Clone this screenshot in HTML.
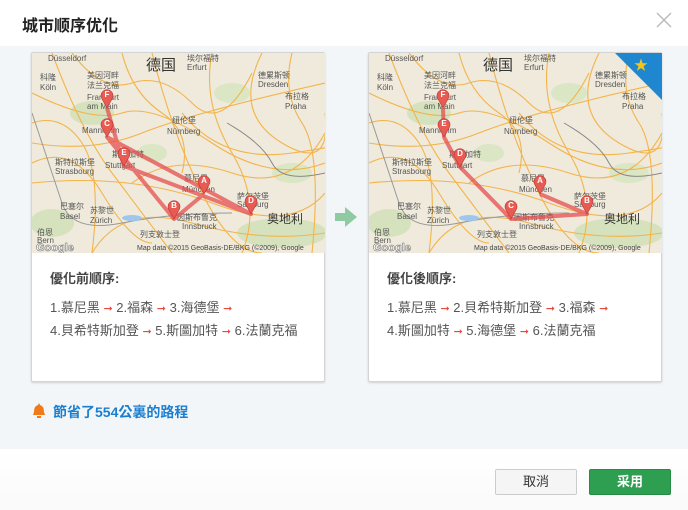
<!DOCTYPE html>
<html><head><meta charset="utf-8"><style>
*{margin:0;padding:0;box-sizing:border-box}
body{width:688px;height:510px;position:relative;overflow:hidden;background:#fff;font-family:"Liberation Sans","Noto Sans CJK TC",sans-serif;color:#333}
.hdr{position:absolute;left:0;top:0;width:688px;height:46px;background:#fff}
.title{position:absolute;left:22px;top:12px;font-size:16px;font-weight:bold;color:#222}
.close{position:absolute;left:654px;top:10px}
.body{position:absolute;left:0;top:46px;width:688px;height:403px;background:#f3f6f9}
.card{position:absolute;top:52px;width:294px;height:330px;background:#fff;border:1px solid #d4d4d4;border-radius:2px;box-shadow:0 1px 2px rgba(0,0,0,.15)}
.card svg{position:absolute;left:0;top:0}
.h{position:absolute;left:18px;top:215px;font-size:13px;font-weight:bold;color:#444}
.l{position:absolute;left:18px;font-size:13px;color:#555;white-space:nowrap}
.a{color:#e8483c;font-size:11px}
.save{position:absolute;left:53px;top:402px;font-size:14px;font-weight:bold;color:#1a7fd0}
.btn{position:absolute;top:469px;height:26px;width:82px;border-radius:2px;font-size:13px;text-align:center;line-height:24px}
.foot{position:absolute;left:0;top:449px;width:688px;height:61px;background:linear-gradient(#fff,#fafafa)}
</style></head><body>
<div class="hdr"></div>
<div class="title">城市顺序优化</div>
<svg class="close" width="20" height="20"><path d="M3 3L17 17M17 3L3 17" stroke="#bbb" stroke-width="1.5"/></svg>
<div class="body"></div>

<svg width="0" height="0" style="position:absolute"><defs>
<g id="map">
<rect width="293" height="200" fill="#efeadc"/>
<ellipse cx="60" cy="60" rx="22" ry="12" fill="#cfe0b5" opacity=".8"/>
<ellipse cx="250" cy="180" rx="45" ry="15" fill="#cfe0b5" opacity=".8"/>
<ellipse cx="20" cy="170" rx="22" ry="14" fill="#cfe0b5" opacity=".8"/>
<ellipse cx="200" cy="40" rx="18" ry="10" fill="#d6e5bf" opacity=".8"/>
<ellipse cx="120" cy="100" rx="15" ry="9" fill="#d6e5bf" opacity=".8"/>
<ellipse cx="260" cy="120" rx="20" ry="10" fill="#d6e5bf" opacity=".8"/>
<g stroke="#f3b44a" fill="none" stroke-width="1.1">
<path d="M0 40 Q60 70 90 60 T180 90 T293 110"/>
<path d="M20 0 Q50 80 80 120 T140 200"/>
<path d="M0 130 Q100 120 180 150 T293 140"/>
<path d="M120 0 Q140 80 170 140 T230 200"/>
<path d="M230 0 Q200 60 250 90 T293 60"/>
<path d="M0 90 Q60 100 110 80 T293 30"/>
<path d="M60 200 Q90 150 160 170 T293 180"/>
<path d="M40 0 Q70 40 100 30 T160 50 T220 20"/>
<path d="M0 110 Q40 90 70 140 T120 190"/>
<path d="M150 60 Q190 110 260 100 T293 90"/>
<path d="M180 0 Q170 50 200 100 T210 200"/>
<path d="M90 0 Q100 40 130 60 T150 120"/>
<path d="M260 0 Q250 40 270 70 T280 200"/>
<path d="M0 70 Q30 60 50 90 T60 200"/>
<path d="M100 130 Q140 100 200 120 T293 80"/>
</g>
<path d="M195 70 Q230 90 240 110 T293 120" stroke="#888" stroke-width="1" fill="none"/>
<path d="M0 60 Q20 120 30 150 T90 170 T200 160" stroke="#999" stroke-width="1" fill="none"/>
<ellipse cx="100" cy="165" rx="10" ry="3" fill="#9ec6ee"/>
<g font-size="8" fill="#555" font-family="Liberation Sans,Noto Sans CJK TC,sans-serif">
<text x="114" y="17" font-size="15" fill="#333">德国</text>
<text x="155" y="8">埃尔福特</text><text x="155" y="17">Erfurt</text>
<text x="16" y="8">Düsseldorf</text>
<text x="8" y="27">科隆</text><text x="8" y="37">Köln</text>
<text x="55" y="25">美因河畔</text><text x="55" y="35">法兰克福</text><text x="55" y="47">Frankfurt</text><text x="55" y="56">am Main</text>
<text x="226" y="25">德累斯顿</text><text x="226" y="34">Dresden</text>
<text x="253" y="46">布拉格</text><text x="253" y="56">Praha</text>
<text x="140" y="70">纽伦堡</text><text x="135" y="81">Nürnberg</text>
<text x="50" y="80">Mannheim</text>
<text x="80" y="104">斯图加特</text><text x="73" y="115">Stuttgart</text>
<text x="23" y="112">斯特拉斯堡</text><text x="23" y="121">Strasbourg</text>
<text x="152" y="128">慕尼黑</text><text x="150" y="139">München</text>
<text x="205" y="146">萨尔茨堡</text><text x="205" y="154">Salzburg</text>
<text x="235" y="170" font-size="12" fill="#333">奥地利</text>
<text x="28" y="156">巴塞尔</text><text x="28" y="166">Basel</text>
<text x="58" y="160">苏黎世</text><text x="58" y="170">Zürich</text>
<text x="145" y="167">因斯布鲁克</text><text x="150" y="176">Innsbruck</text>
<text x="108" y="184">列支敦士登</text>
<text x="5" y="182">伯恩</text><text x="5" y="190">Bern</text>
<text x="4" y="198" font-size="11" font-weight="bold" fill="#fff" stroke="#666" stroke-width=".5">Google</text>
<text x="105" y="197" font-size="7" fill="#444">Map data ©2015 GeoBasis-DE/BKG (©2009), Google</text>
</g>
</g>
<g id="pin"><path d="M0 0 L-5 -9 A6 6 0 1 1 5 -9 Z" fill="#e85b52" stroke="#b33" stroke-width=".6"/></g>
</defs></svg>

<div class="card" style="left:31px">
<svg width="293" height="200">
<use href="#map"/>
<polyline points="172,141 142,166 75,84 219,161 92,113 75,55" fill="none" stroke="#e54e4e" stroke-width="4" opacity=".75" stroke-linejoin="round"/>
<g font-size="8" fill="#fff" font-weight="bold" text-anchor="middle" font-family="Liberation Sans">
<use href="#pin" x="75" y="55"/><text x="75" y="44">F</text>
<use href="#pin" x="75" y="84"/><text x="75" y="73">C</text>
<use href="#pin" x="92" y="113"/><text x="92" y="102">E</text>
<use href="#pin" x="172" y="141"/><text x="172" y="130">A</text>
<use href="#pin" x="142" y="166"/><text x="142" y="155">B</text>
<use href="#pin" x="219" y="161"/><text x="219" y="150">D</text>
</g></svg>
<div class="h">優化前順序:</div>
<div class="l" style="top:244px">1.慕尼黑 <span class="a">➞</span> 2.福森 <span class="a">➞</span> 3.海德堡 <span class="a">➞</span></div>
<div class="l" style="top:267px">4.貝希特斯加登 <span class="a">➞</span> 5.斯圖加特 <span class="a">➞</span> 6.法蘭克福</div>
</div>

<svg style="position:absolute;left:335px;top:207px" width="22" height="20"><path d="M0 6H10V0L22 10L10 20V14H0Z" fill="#8fcaa3"/></svg>

<div class="card" style="left:368px">
<svg width="293" height="200">
<use href="#map"/>
<path d="M246 0H293V47Z" fill="#1f86d0"/>
<text x="272" y="17" font-size="14" fill="#f5c518" text-anchor="middle">★</text>
<polyline points="74,55 75,84 91,114 142,166 218,161 171,141" fill="none" stroke="#e54e4e" stroke-width="4" opacity=".75" stroke-linejoin="round"/>
<g font-size="8" fill="#fff" font-weight="bold" text-anchor="middle" font-family="Liberation Sans">
<use href="#pin" x="74" y="55"/><text x="74" y="44">F</text>
<use href="#pin" x="75" y="84"/><text x="75" y="73">E</text>
<use href="#pin" x="91" y="114"/><text x="91" y="103">D</text>
<use href="#pin" x="171" y="141"/><text x="171" y="130">A</text>
<use href="#pin" x="142" y="166"/><text x="142" y="155">C</text>
<use href="#pin" x="218" y="161"/><text x="218" y="150">B</text>
</g></svg>
<div class="h">優化後順序:</div>
<div class="l" style="top:244px">1.慕尼黑 <span class="a">➞</span> 2.貝希特斯加登 <span class="a">➞</span> 3.福森 <span class="a">➞</span></div>
<div class="l" style="top:267px">4.斯圖加特 <span class="a">➞</span> 5.海德堡 <span class="a">➞</span> 6.法蘭克福</div>
</div>

<svg style="position:absolute;left:32px;top:403px" width="14" height="16"><path d="M7 0L8 2Q12 3 12 9L13 12H1L2 9Q2 3 6 2Z" fill="#f07a1a"/><rect x="5" y="13" width="4" height="2" fill="#f07a1a"/></svg>
<div class="save">節省了554公裏的路程</div>

<div class="foot"></div>
<div class="btn" style="left:495px;background:#f5f5f5;border:1px solid #ccc;color:#333">取消</div>
<div class="btn" style="left:589px;background:#2e9e50;border:1px solid #278a45;color:#fff;font-weight:bold">采用</div>
</body></html>
